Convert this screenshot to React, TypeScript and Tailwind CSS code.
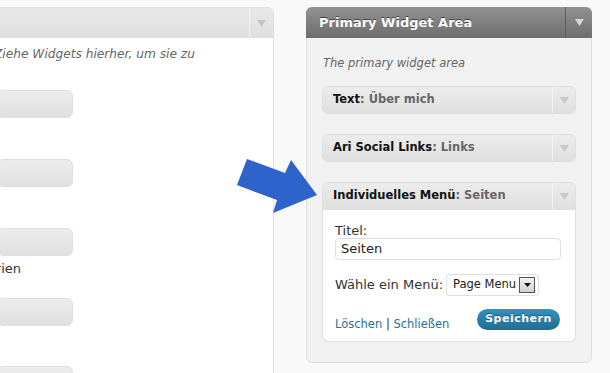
import React from "react";

const Tri = ({ c = "#c8c8c8" }: { c?: string }) => (
  <svg width="9" height="7" viewBox="0 0 9 7">
    <polygon points="0,0 9,0 4.5,7" fill={c} />
  </svg>
);

const WidgetBar = ({ title, sub, open }: { title: string; sub: string; open?: boolean }) => (
  <div
    className={`flex h-[28px] items-stretch border border-[#dfdfdf] bg-gradient-to-b from-[#ececec] to-[#dfdfdf] ${
      open ? "rounded-t-[6px]" : "rounded-[6px]"
    }`}
  >
    <div className="flex flex-1 items-center whitespace-nowrap pl-[10px] text-[11.5px] font-bold text-[#111]">
      {title}
      <span className="text-[11.5px] text-[#666]">: {sub}</span>
    </div>
    <div className="flex w-[23px] items-center justify-center border-l border-[#f4f4f4]">
      <Tri c="#c8c8c8" />
    </div>
  </div>
);

const LeftBar = ({ mt }: { mt: string }) => (
  <div className={`${mt} h-[28px] w-[76px] rounded-[6px] border border-[#dfdfdf] bg-gradient-to-b from-[#ececec] to-[#e0e0e0]`} />
);

export default function App() {
  return (
    <div
      className="relative h-[373px] w-[610px] overflow-hidden bg-[#f9f9f9]"
      style={{ fontFamily: '"DejaVu Sans", Verdana, sans-serif' }}
    >
      <div className="flex items-start pt-[7px]">
        {/* Left panel */}
        <div className="-ml-[20px] h-[400px] w-[294px] rounded-tr-[6px] border border-[#dfdfdf] bg-white">
          <div className="flex h-[30px] items-stretch rounded-tr-[6px] bg-gradient-to-b from-[#e8e8e8] to-[#dfdfdf]">
            <div className="flex-1" />
            <div className="flex w-[24px] items-center justify-center border-l border-[#f2f2f2]">
              <Tri c="#c4c4c4" />
            </div>
          </div>
          <div className="pl-[16px]">
            <div className="-ml-[3px] mt-[8px] whitespace-nowrap text-[12.2px] italic leading-[16px] text-[#666]">
              Ziehe Widgets hierher, um sie zu
            </div>
            <LeftBar mt="mt-[28px]" />
            <LeftBar mt="mt-[41px]" />
            <LeftBar mt="mt-[41px]" />
            <div className="mt-[5px] flex w-[24px] justify-end">
              <span className="whitespace-nowrap text-[13px] leading-[16px] text-[#333]">Kategorien</span>
            </div>
            <LeftBar mt="mt-[21px]" />
            <LeftBar mt="mt-[40px]" />
          </div>
        </div>

        {/* Right panel */}
        <div className="ml-[32px] h-[356px] w-[286px] rounded-[6px] border border-[#dfdfdf] bg-[#f1f1f1]">
          <div className="-m-px flex h-[31px] items-stretch rounded-t-[6px] bg-gradient-to-b from-[#929292] to-[#6d6d6d]">
            <div
              className="flex flex-1 items-center pl-[13px] text-[13px] font-bold text-white"
              style={{ textShadow: "0 -1px 0 #3f3f3f" }}
            >
              Primary Widget Area
            </div>
            <div className="flex w-[27px] items-center justify-center border-l border-[#5f5f5f]">
              <Tri c="#d8d8d8" />
            </div>
          </div>
          <div className="px-[15px]">
            <div className="mt-[18px] pl-[1px] text-[11.5px] italic leading-[16px] text-[#666]">
              The primary widget area
            </div>
            <div className="mt-[15px]">
              <WidgetBar title="Text" sub="Über mich" />
            </div>
            <div className="mt-[20px]">
              <WidgetBar title="Ari Social Links" sub="Links" />
            </div>
            <div className="mt-[20px]">
              <WidgetBar title="Individuelles Menü" sub="Seiten" open />
              <div className="h-[132px] rounded-b-[6px] border border-t-0 border-[#dfdfdf] bg-white px-[12px]">
                <div className="pt-[13px] text-[13px] leading-[15px] text-[#333]">Titel:</div>
                <div className="flex h-[22px] w-[226px] items-center rounded-[4px] border border-[#dfdfdf] bg-white pl-[5px] text-[13px] text-[#222]">
                  Seiten
                </div>
                <div className="mt-[14px] flex items-center">
                  <span className="text-[13px] text-[#333]">Wähle ein Menü:</span>
                  <div className="ml-[3px] flex h-[22px] w-[93px] items-center rounded-[3px] border border-[#dfdfdf] bg-white pl-[6px] text-[11.5px] text-[#222]">
                    <span className="flex-1 whitespace-nowrap">Page Menu</span>
                    <div className="mr-[3px] flex h-[16px] w-[16px] items-center justify-center border border-[#555] bg-gradient-to-b from-[#f2f2f2] to-[#d0d0d0]">
                      <svg width="7" height="4" viewBox="0 0 7 4">
                        <polygon points="0,0 7,0 3.5,4" fill="#111" />
                      </svg>
                    </div>
                  </div>
                </div>
                <div className="mt-[13px] flex items-start justify-between">
                  <span className="mt-[7px] text-[11.5px] leading-[16px] text-[#21759b]">
                    Löschen <span className="text-[#333]">|</span> Schließen
                  </span>
                  <button
                    className="mr-[3px] h-[21px] w-[83px] rounded-full bg-gradient-to-b from-[#3592be] to-[#1f6d92] text-[11px] font-bold tracking-[0.5px] text-white"
                    style={{ textShadow: "0 -1px 0 #1a5a7a" }}
                  >
                    Speichern
                  </button>
                </div>
              </div>
            </div>
          </div>
        </div>
      </div>

      {/* Arrow overlay */}
      <svg className="absolute left-0 top-0" width="610" height="373" viewBox="0 0 610 373">
        <polygon
          points="247,159 285,173 291,160 317,195 273,213 277,200 237,185"
          fill="#2f63cc"
        />
      </svg>
    </div>
  );
}
